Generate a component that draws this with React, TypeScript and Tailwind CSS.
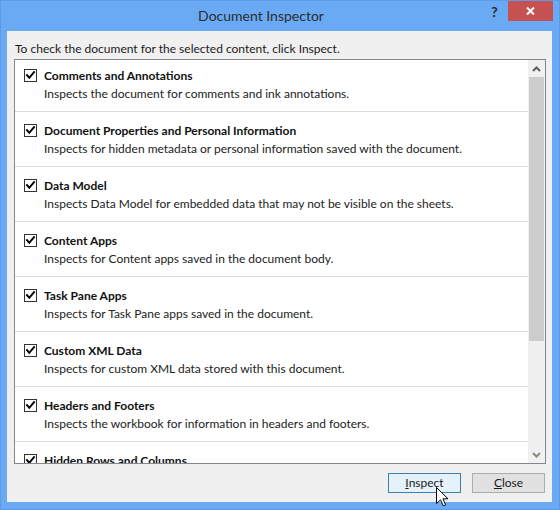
import React from "react";

const items: [string, string][] = [
  ["Comments and Annotations", "Inspects the document for comments and ink annotations."],
  ["Document Properties and Personal Information", "Inspects for hidden metadata or personal information saved with the document."],
  ["Data Model", "Inspects Data Model for embedded data that may not be visible on the sheets."],
  ["Content Apps", "Inspects for Content apps saved in the document body."],
  ["Task Pane Apps", "Inspects for Task Pane apps saved in the document."],
  ["Custom XML Data", "Inspects for custom XML data stored with this document."],
  ["Headers and Footers", "Inspects the workbook for information in headers and footers."],
  ["Hidden Rows and Columns", "Inspects the workbook for hidden rows and columns."],
];

function Check() {
  return (
    <div className="w-[13px] h-[13px] shrink-0 border border-[#333333] bg-white mt-[2px] flex items-center justify-center">
      <svg width="11" height="11" viewBox="0 0 11 11">
        <path d="M2 5.2 L4.3 7.8 L9 2.2" fill="none" stroke="#000" strokeWidth="2" strokeLinecap="square" />
      </svg>
    </div>
  );
}

export default function App() {
  const font = { fontFamily: 'Lato, "Noto Sans", sans-serif' };
  return (
    <div className="w-[560px] h-[510px] bg-[#6aaaf4] border border-[#5d9be6] flex flex-col text-[#1a1a1a] relative" style={font}>
      <div className="h-[30px] grid shrink-0">
        <div className="col-start-1 row-start-1 text-center pr-[38px] pt-[5px] text-[14px] leading-[20px] text-[#2d2d2d]">
          Document Inspector
        </div>
        <div className="col-start-1 row-start-1 justify-self-end flex items-start mr-[6px]">
          <div className="w-[27px] text-center text-[14px] font-bold leading-[16px] pt-[3px] text-[#2a2a2a]">?</div>
          <div className="w-[45px] h-[20px] bg-[#c75050] flex items-center justify-center">
            <svg width="9" height="8" viewBox="0 0 9 8">
              <path d="M1 0.5 L8 7.5 M8 0.5 L1 7.5" stroke="#fff" strokeWidth="2" />
            </svg>
          </div>
        </div>
      </div>
      <div className="flex-1 pl-[6px] pr-[7px] pb-[7px] flex">
        <div className="flex-1 bg-[#f0f0f0] flex flex-col pl-[7px] pr-[6px]">
          <div className="pt-[10px] pl-[1px] text-[12px] leading-[16px] h-[28px]">
            To check the document for the selected content, click Inspect.
          </div>
          <div className="h-[405px] border border-[#828790] bg-white flex overflow-hidden">
            <div className="flex-1 overflow-hidden">
              <div className="mt-[-3px]">
                {items.map(([t, d]) => (
                  <div key={t} className="h-[55px] border-b border-[#dcdcdc] flex gap-[7px] pl-[9px] pt-[10px]">
                    <Check />
                    <div className="flex flex-col pt-[1px]">
                      <div className="text-[12px] leading-[16px] font-bold text-[#111]">{t}</div>
                      <div className="text-[12px] leading-[16px] mt-[2px] text-[#222]">{d}</div>
                    </div>
                  </div>
                ))}
              </div>
            </div>
            <div className="w-[17px] bg-[#f0f0f0] flex flex-col">
              <div className="h-[17px] flex items-center justify-center">
                <svg width="9" height="6" viewBox="0 0 9 6">
                  <path d="M1 5 L4.5 1.5 L8 5" fill="none" stroke="#606060" strokeWidth="2" />
                </svg>
              </div>
              <div className="h-[264px] mx-[1px] bg-[#cdcdcd]" />
              <div className="flex-1" />
              <div className="h-[17px] flex items-center justify-center">
                <svg width="9" height="6" viewBox="0 0 9 6">
                  <path d="M1 1 L4.5 4.5 L8 1" fill="none" stroke="#8a8a8a" strokeWidth="2" />
                </svg>
              </div>
            </div>
          </div>
          <div className="mt-[9px] flex justify-end gap-[11px] pr-[1px]">
            <div className="w-[73px] h-[20px] border border-[#3c7fb1] bg-[#e5f1fb] text-[12px] leading-[18px] text-center">
              <span className="underline">I</span>nspect
            </div>
            <div className="w-[73px] h-[20px] border border-[#adadad] bg-[#e1e1e1] text-[12px] leading-[18px] text-center">
              <span className="underline">C</span>lose
            </div>
          </div>
        </div>
      </div>
      <svg className="absolute left-[435px] top-[486px]" width="13" height="20" viewBox="0 0 13 20">
        <path d="M0.5 0.5 L0.5 16.5 L4.5 12.8 L7.2 18.8 L9.6 17.8 L7 11.8 L12 11.8 Z" fill="#fff" stroke="#000" strokeWidth="1" />
      </svg>
    </div>
  );
}
